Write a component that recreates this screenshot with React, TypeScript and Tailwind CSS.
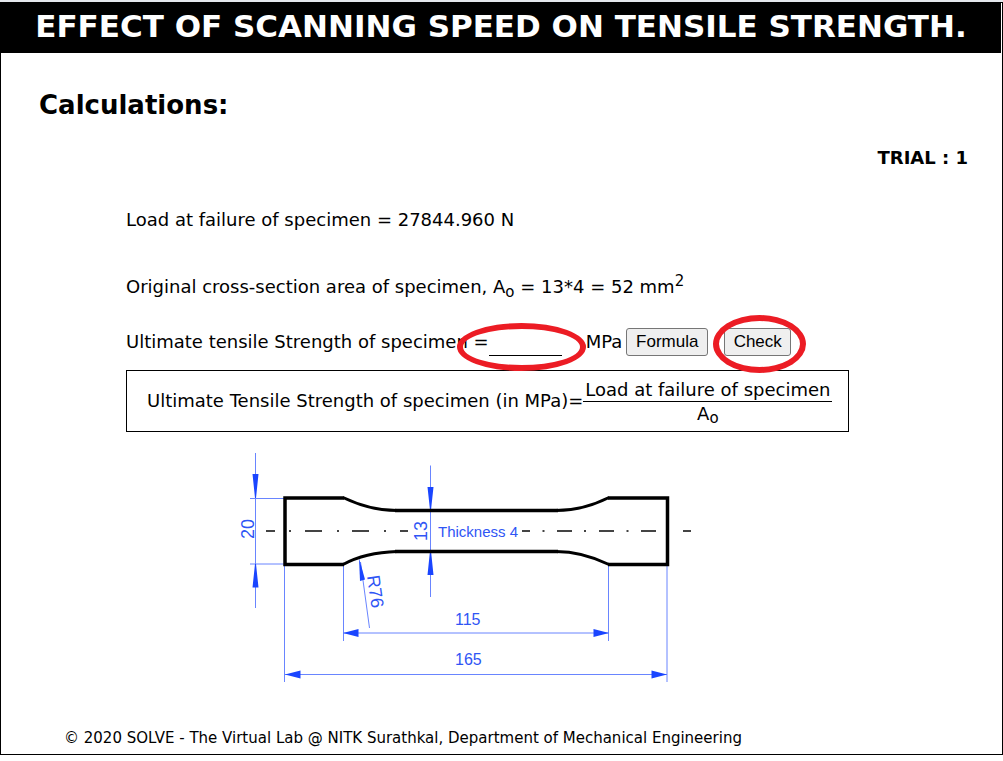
import { useState } from "react";

const BLUE = "#1a45ff";

function SpecimenDrawing() {
  return (
    <svg
      viewBox="0 0 464 236"
      className="block h-[236px] w-[464px]"
      role="img"
      aria-label="Tensile specimen dimensions"
      fontFamily="'Liberation Sans', sans-serif"
      fontSize="16"
    >
      <g transform="translate(-236 -450)">
        <g stroke={BLUE} strokeWidth="1" fill="none" opacity="0.65">
          <path d="M255.5 453V608M250 498.5H285M250 564H285" />
          <path d="M430.5 465.500V597" />
          <path d="M284.500 565V682M343.500 565V641M608.500 565V641M667 565V682" />
          <path d="M343 633H609M285 674.500H667" />
          <path d="M360.500 562L369.500 628" />
        </g>
        <g fill={BLUE}>
          <path d="M252.500 474H258.500L256 498H255ZM252.500 587.500H258.500L256 564H255Z" />
          <path d="M427.500 487H433.500L431 510H430ZM427.500 575H433.500L431 551H430Z" />
          <path d="M343 633L358.500 629V637ZM609 633L593.500 629V637Z" />
          <path d="M285 674.500L300.500 670.500V678.500ZM667 674.500L651.500 670.500V678.500Z" />
          <path d="M359 558L365 579.500L360 581Z" />
        </g>
        <g stroke="#444" strokeWidth="2">
          <path d="M266 531H275M289 531H291M305 531H322M337 531H339M352 531H369M384 531H386M400 531H408M522 531H530M542.500 531H544.500M557 531H572M584 531H586M599 531H614M626.500 531H628.500M641 531H656M683 531H691" />
        </g>
        <g stroke="#000" fill="none">
          <path
            strokeWidth="3.500"
            d="M344 498H285V564.500H344M608 498H667.500V564.500H608M395 510.500H558M395 551.500H558"
          />
          <path
            strokeWidth="3"
            d="M343 497.500Q370 510.500 397 510.500M343 564.500Q365 552.500 397 551.500M609 497.500Q583 510.500 556 510.500M609 564.500Q582 551.500 556 551.500"
          />
        </g>
        <g fill="#2f55f5">
          <text x="438" y="537" fontSize="15">Thickness 4</text>
          <text x="455" y="625">115</text>
          <text x="455" y="665">165</text>
          <g fontSize="18">
            <text x="254" y="539" transform="rotate(-90 254 539)">20</text>
            <text x="427" y="541" transform="rotate(-90 427 541)">13</text>
            <text x="367" y="576" transform="rotate(82 367 576)">R76</text>
          </g>
        </g>
      </g>
    </svg>
  );
}

export default function App() {
  const [stress, setStress] = useState("");
  const [showFormula, setShowFormula] = useState(true);

  return (
    <div className="bg-[#e4e7ec] pt-0.5 font-['Verdana','DejaVu_Sans',sans-serif] text-[18px] leading-6 text-black">
      <div className="border border-black bg-white">
        <header className="mr-px bg-black pt-1 pb-2 text-center text-[31px] leading-[38px] font-bold whitespace-nowrap text-white">
          <h1>EFFECT OF SCANNING SPEED ON TENSILE STRENGTH.</h1>
        </header>

        <main className="pt-9">
          <h2 className="pl-[38px] text-[26px] leading-8 font-bold">Calculations:</h2>
          <p className="pt-[25px] pr-[34px] text-right font-bold">TRIAL : 1</p>

          <div className="pr-8 pl-[125px]">
            <p className="pt-[38px] whitespace-nowrap">Load at failure of specimen = 27844.960 N</p>
            <p className="pt-[43px] whitespace-nowrap">
              Original cross-section area of specimen, A<sub className="text-[15px]">o</sub> = 13*4 = 52 mm
              <sup className="text-[15px]">2</sup>
            </p>

            <div className="flex items-center pt-[29px] whitespace-nowrap">
              <label htmlFor="stress">Ultimate tensile Strength of specimen =</label>
              <span className="relative flex">
                <input
                  id="stress"
                  value={stress}
                  onChange={(event) => setStress(event.target.value)}
                  className="h-7 w-[73px] border-b border-black outline-none"
                />
                <span className="pointer-events-none absolute -top-[5px] -left-8 h-12 w-[129px] rounded-[50%] border-6 border-[#ec1c24]" />
              </span>
              <span className="ml-6">MPa</span>
              <button
                type="button"
                onClick={() => setShowFormula(!showFormula)}
                className="ml-1 h-7 w-[82px] rounded-[3px] border border-[#767676] bg-[#efefef] font-['Liberation_Sans',sans-serif] text-[17px]"
              >
                Formula
              </button>
              <span className="relative ml-4 flex">
                <button
                  type="button"
                  className="h-7 w-[67px] rounded-[3px] border border-[#767676] bg-[#efefef] font-['Liberation_Sans',sans-serif] text-[17px]"
                >
                  Check
                </button>
                <span className="pointer-events-none absolute -top-[13px] -left-[11px] h-[58px] w-[93px] rounded-[50%] border-6 border-[#ec1c24]" />
              </span>
            </div>

            {showFormula && (
              <div className="mt-3.5 flex h-[62px] w-fit items-center border border-black pr-4 pl-5 whitespace-nowrap">
                <span>Ultimate Tensile Strength of specimen (in MPa)=</span>
                <span className="flex flex-col text-center">
                  <span className="border-b border-black px-0.5 pt-0.5 leading-[22px]">
                    Load at failure of specimen
                  </span>
                  <span>
                    A<sub className="text-[15px]">o</sub>
                  </span>
                </span>
              </div>
            )}
          </div>

          <div className="pt-[18px] pl-[235px]">
            <SpecimenDrawing />
          </div>
        </main>

        <footer className="pt-10 pb-1 pl-[63px] text-[15px]">
          © 2020 SOLVE - The Virtual Lab @ NITK Surathkal, Department of Mechanical Engineering
        </footer>
      </div>
    </div>
  );
}
